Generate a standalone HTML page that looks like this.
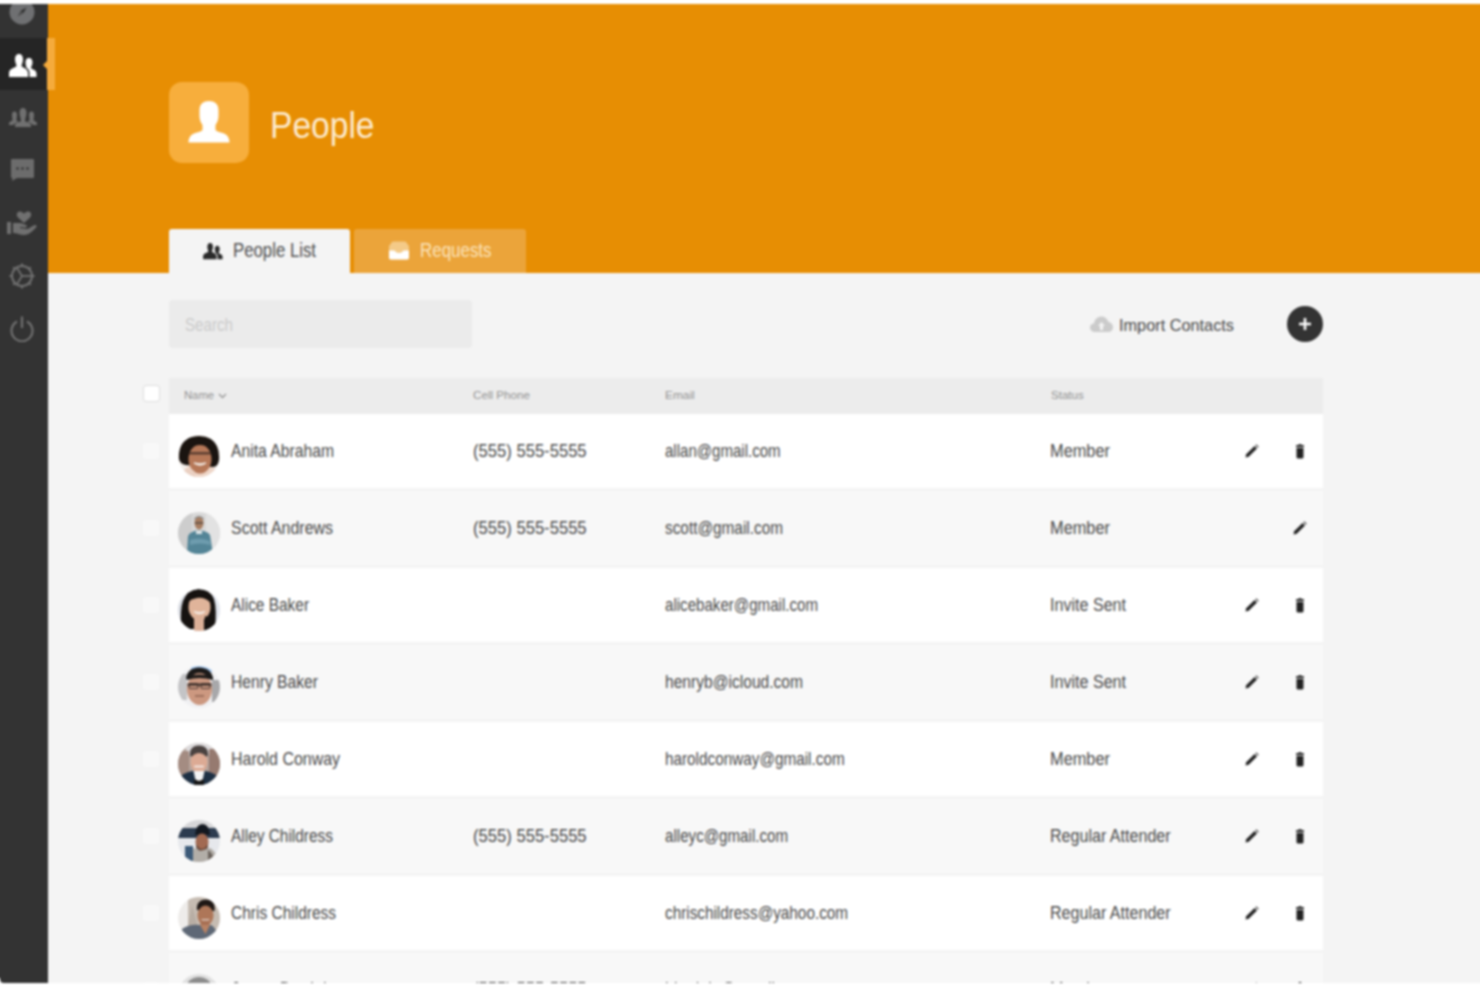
<!DOCTYPE html>
<html><head><meta charset="utf-8">
<style>
*{margin:0;padding:0;box-sizing:border-box}
html,body{width:1480px;height:987px;overflow:hidden;background:#fff;font-family:"Liberation Sans",sans-serif}
#wrap{position:absolute;left:0;top:0;width:1480px;height:987px;filter:blur(1px)}
#app{position:absolute;left:0;top:4px;width:1480px;height:979px;background:#f4f4f4;overflow:hidden}
#side{position:absolute;left:0;top:0;width:48px;height:979px;background:#333;border-bottom-left-radius:4px}
#hdr{position:absolute;left:48px;top:0;right:0;height:269px;background:#e78e03}
.abs{position:absolute}
svg{display:block}
.txt{position:absolute;white-space:nowrap;line-height:1;transform-origin:0 0}
.row{position:absolute;left:169px;width:1154px;height:74px}
.cb{position:absolute;left:143px;width:16px;height:16px;background:#f8f8f8;border-radius:3px}
.rt{font-size:16px;color:#555}

.th{font-size:11.5px;color:#a5a5a5;top:386px}
</style></head>
<body>
<div id="wrap">
<div class="abs" style="left:-12px;top:4px;width:12px;height:974px;background:#333"></div>
<div class="abs" style="left:-12px;top:38px;width:12px;height:52px;background:#252525"></div>
<div class="abs" style="left:1480px;top:4px;width:12px;height:269px;background:#e78e03"></div>
<div class="abs" style="left:1480px;top:273px;width:12px;height:710px;background:#f4f4f4"></div>
<div id="app">
  <div id="hdr"></div>
  <div id="side">
    <div class="abs" style="left:0;top:34px;width:48px;height:52px;background:#252525"></div>
    <!-- compass -->
    <svg class="abs" style="left:9px;top:-5px" width="26" height="26" viewBox="0 0 26 26"><circle cx="13" cy="13" r="12.5" fill="#6f7072"/><path d="M17.5 8.5 L14.3 14.3 L11.7 11.7 Z" fill="#2e2e2e"/><path d="M8.5 17.5 L11.7 11.7 L14.3 14.3 Z" fill="#4a4a4a"/></svg>
    <!-- people active -->
    <svg class="abs" style="left:9px;top:50px" width="28" height="24" viewBox="0 0 28 24"><path d="M10 0 C13 0 14 2.5 14 5.5 C14 8.5 12.5 10.5 12.5 12 C12.5 13.5 19 14 19 19 L19 23 L0 23 L0 19 C0 14 7.5 13.5 7.5 12 C7.5 10.5 6 8.5 6 5.5 C6 2.5 7 0 10 0 Z" fill="#fff"/><path d="M20 4 C22.5 4 23.5 6 23.5 8.5 C23.5 11 22 12.5 22 14 C22 15 27.5 15.5 27.5 19.5 L27.5 23 L20.5 23 L20.5 19 C20.5 16.5 19.5 15 17.5 14 C17.5 13 16.5 11 16.5 8.5 C16.5 6 17.5 4 20 4 Z" fill="#fff"/></svg>
    <!-- groups -->
    <svg class="abs" style="left:9px;top:104px" width="28" height="20" viewBox="0 0 28 20"><path d="M14 0 C16.5 0 17.5 2 17.5 5 C17.5 8 16 10 16 13 C16 14 22 14.5 22 17 L22 19 L6 19 L6 17 C6 14.5 12 14 12 13 C12 10 10.5 8 10.5 5 C10.5 2 11.5 0 14 0 Z" fill="#707070"/><path d="M5.5 3.5 C7.5 3.5 8 5 8 7 C8 9 7.5 10.5 7.5 12 C7.5 13 9 13.5 10 14 C6 15 4.5 16 4.5 17 L0 17 L0 15.5 C0 13.5 3.5 13 3.5 12 C3.5 10.5 3 9 3 7 C3 5 3.5 3.5 5.5 3.5 Z" fill="#707070"/><path d="M22.5 3.5 C24.5 3.5 25 5 25 7 C25 9 24.5 10.5 24.5 12 C24.5 13 28 13.5 28 15.5 L28 17 L23.5 17 C23.5 16 22 15 18 14 C19 13.5 20.5 13 20.5 12 C20.5 10.5 20 9 20 7 C20 5 20.5 3.5 22.5 3.5 Z" fill="#707070"/></svg>
    <!-- chat -->
    <svg class="abs" style="left:11px;top:155px" width="23" height="23" viewBox="0 0 23 23"><path d="M0 1 Q0 0 1 0 L22 0 Q23 0 23 1 L23 18 Q23 19 22 19 L6 19 L1 22 L1.5 19 L1 19 Q0 19 0 18 Z" fill="#6c6c6c"/><circle cx="6.5" cy="9.5" r="1.3" fill="#333"/><circle cx="11.5" cy="9.5" r="1.3" fill="#333"/><circle cx="16.5" cy="9.5" r="1.3" fill="#333"/></svg>
    <!-- hand heart -->
    <svg class="abs" style="left:7px;top:207px" width="30" height="26" viewBox="0 0 30 26"><path d="M17 12 L11 6.5 C9 4.5 9.5 1 12.5 0.5 C14.5 0.2 16 1.5 17 2.8 C18 1.5 19.5 0.2 21.5 0.5 C24.5 1 25 4.5 23 6.5 Z" fill="#707070"/><rect x="0" y="11" width="4" height="12" fill="#707070"/><path d="M6 12 L13 12 C15 12 16 13 19 14 C20.5 14.5 20 16.5 18.5 16.5 L13 16 L13 17 L20 18 C22 18 26 14 28 14 C30 14 30 15.5 29 16.5 C26 19.5 22 24 17 24 C13 24 10 22 6 22 Z" fill="#707070"/></svg>
    <!-- gear -->
    <svg class="abs" style="left:9px;top:259px" width="26" height="26" viewBox="0 0 26 26"><circle cx="13" cy="13" r="10" fill="none" stroke="#707070" stroke-width="2"/><g stroke="#707070" stroke-width="2"><path d="M13 0.5 V3"/><path d="M13 23 V25.5"/><path d="M0.5 13 H3"/><path d="M23 13 H25.5"/><path d="M4.2 4.2 L6 6"/><path d="M20 20 L21.8 21.8"/><path d="M21.8 4.2 L20 6"/><path d="M6 20 L4.2 21.8"/></g><g stroke="#707070" stroke-width="1.8"><path d="M13 13 H22"/><path d="M13 13 L8 5"/><path d="M13 13 L8 21"/></g></svg>
    <!-- power -->
    <svg class="abs" style="left:9px;top:312px" width="26" height="26" viewBox="0 0 26 26"><path d="M8 5.5 A10.5 10.5 0 1 0 18 5.5" fill="none" stroke="#707070" stroke-width="2.2"/><path d="M13 0.5 V12" stroke="#707070" stroke-width="2.2"/></svg>
  </div>
  <div class="abs" style="left:47px;top:34px;width:8px;height:52px;background:#f5ab3c"></div>
  <div class="abs" style="left:43px;top:57px;width:0;height:0;border-top:4px solid transparent;border-bottom:4px solid transparent;border-right:4px solid #f5ab3c"></div>

  <!-- title -->
  <div class="abs" style="left:169px;top:78px;width:80px;height:81px;background:#f7ae3c;border-radius:13px"></div>
  <svg class="abs" style="left:188px;top:96px" width="42" height="44" viewBox="0 0 42 44"><path d="M21 1 C26.5 1 30.5 4 30.5 10 L30.5 16 C30.5 20 29 23 27.5 25 L27.5 30 C28.5 31.5 33 32.5 36 33.5 C40 35 41.5 39 41.5 42.5 L0.5 42.5 C0.5 39 2 35 6 33.5 C9 32.5 13.5 31.5 14.5 30 L14.5 25 C13 23 11.5 20 11.5 16 L11.5 10 C11.5 4 15.5 1 21 1 Z" fill="#fff"/></svg>

  <!-- tabs -->
  <div class="abs" style="left:169px;top:225px;width:181px;height:44px;background:#f4f4f4;border-radius:3px 3px 0 0"></div>
  <svg class="abs" style="left:203px;top:239px" width="20" height="17" viewBox="0 0 28 24"><path d="M10 0 C13 0 14 2.5 14 5.5 C14 8.5 12.5 10.5 12.5 12 C12.5 13.5 19 14 19 19 L19 23 L0 23 L0 19 C0 14 7.5 13.5 7.5 12 C7.5 10.5 6 8.5 6 5.5 C6 2.5 7 0 10 0 Z" fill="#2a2a2a"/><path d="M20 4 C22.5 4 23.5 6 23.5 8.5 C23.5 11 22 12.5 22 14 C22 15 27.5 15.5 27.5 19.5 L27.5 23 L20.5 23 L20.5 19 C20.5 16.5 19.5 15 17.5 14 C17.5 13 16.5 11 16.5 8.5 C16.5 6 17.5 4 20 4 Z" fill="#2a2a2a"/></svg>
  <div class="abs" style="left:354px;top:225px;width:172px;height:44px;background:#eba43a;border-radius:3px 3px 0 0"></div>
  <svg class="abs" style="left:389px;top:237px" width="20" height="19" viewBox="0 0 20 19"><path d="M2 2.5 Q2.5 0.5 4.5 0.5 L15.5 0.5 Q17.5 0.5 18 2.5 L20 5 L20 17 Q20 18.5 18.5 18.5 L1.5 18.5 Q0 18.5 0 17 L0 5 Z" fill="#f4ca88"/><path d="M0 9.5 L5.5 9.5 Q7 12 10 12 Q13 12 14.5 9.5 L20 9.5 L20 16.5 Q20 18.5 18 18.5 L2 18.5 Q0 18.5 0 16.5 Z" fill="#fff"/></svg>

  <!-- search -->
  <div class="abs" style="left:169px;top:296px;width:303px;height:48px;background:#ebebeb;border-radius:4px"></div>

  <svg class="abs" style="left:1090px;top:312px" width="23" height="16" viewBox="0 0 23 16"><path d="M5 16 C2 16 0 14 0 11.5 C0 9 2 7.5 4 7.5 C4.5 3.5 7.5 0.5 11.5 0.5 C15 0.5 17.5 3 18.5 6 C21 6.2 23 8.5 23 11 C23 14 21 16 18 16 Z" fill="#cbcbcb"/><path d="M11.5 6 L15 10 L13 10 L13 14 L10 14 L10 10 L8 10 Z" fill="#f4f4f4"/></svg>
  <div class="abs" style="left:1287px;top:302px;width:36px;height:36px;background:#333;border-radius:50%"></div>
  <svg class="abs" style="left:1298px;top:313px" width="14" height="14" viewBox="0 0 14 14"><path d="M7 1 V13 M1 7 H13" stroke="#fff" stroke-width="2.6"/></svg>

  <!-- table header -->
  <div class="abs" style="left:169px;top:374px;width:1154px;height:36px;background:#ececec"></div>
  <div class="abs" style="left:143px;top:381px;width:17px;height:17px;background:#fff;border:1px solid #ddd;border-radius:3px"></div>
  <svg class="abs" style="left:218px;top:389px" width="9" height="6" viewBox="0 0 9 6"><path d="M1 1 L4.5 4.5 L8 1" fill="none" stroke="#999" stroke-width="1.4"/></svg>

<div class="txt" style="left:270.0px;top:103.17px;font-size:37px;color:#fdebd0;transform:scaleX(0.907);">People</div>
<div class="txt" style="left:232.5px;top:237.49px;font-size:19.5px;color:#4e4e4e;transform:scaleX(0.860);">People List</div>
<div class="txt" style="left:420.0px;top:237.49px;font-size:19.5px;color:#fbe3bb;transform:scaleX(0.868);">Requests</div>
<div class="txt" style="left:185.0px;top:312.68px;font-size:17.5px;color:#cacaca;transform:scaleX(0.866);">Search</div>
<div class="txt" style="left:1119.0px;top:312.61px;font-size:17px;color:#484848;transform:scaleX(0.958);">Import Contacts</div>
<div class="txt" style="left:184.0px;top:385.56px;font-size:11.5px;color:#929292;transform:scaleX(0.978);">Name</div>
<div class="txt" style="left:473.0px;top:385.56px;font-size:11.5px;color:#929292;transform:scaleX(1.013);">Cell Phone</div>
<div class="txt" style="left:665.0px;top:385.56px;font-size:11.5px;color:#929292;transform:scaleX(1.033);">Email</div>
<div class="txt" style="left:1050.5px;top:385.56px;font-size:11.5px;color:#929292;transform:scaleX(1.006);">Status</div>
<div class="row" style="top:410px;background:#ffffff"></div>
<div class="cb" style="top:439px"></div>
<div class="abs" style="left:178px;top:431px"><svg class="av" width="42" height="42" viewBox="0 0 42 42"><defs><clipPath id="c0"><circle cx="21" cy="21" r="21"/></clipPath></defs><g clip-path="url(#c0)"><rect width="42" height="42" fill="#f4eeea"/><path d="M4 42 Q6 31 14 30 L30 30 Q38 31 40 42 Z" fill="#eed6c8"/><path d="M1 24 Q0 6 14 2 Q24 -1 33 4 Q42 10 41 25 Q40 32 35 32 L8 30 Q2 29 1 24 Z" fill="#1a1410"/><ellipse cx="22" cy="24" rx="11.5" ry="14.5" fill="#b67858"/><path d="M10 14 Q22 6 34 14 L34 11 Q22 3 10 11 Z" fill="#1a1410"/><path d="M11 17 H33 V19.5 H11 Z" fill="#3e2c24" opacity=".75"/><path d="M16 28 Q22 32 28 28 Q22 30 16 28 Z" fill="#fff" stroke="#f4ece6" stroke-width="1.5"/><path d="M6 36 Q12 31 17 37 L17 42 L5 42 Z" fill="#ead0c2"/></g></svg></div>
<div class="txt" style="left:231.0px;top:437.96px;font-size:18px;color:#4a4a4a;transform:scaleX(0.872);">Anita Abraham</div>
<div class="txt" style="left:473.0px;top:437.96px;font-size:18px;color:#4a4a4a;transform:scaleX(0.923);">(555) 555-5555</div>
<div class="txt" style="left:665.0px;top:437.96px;font-size:18px;color:#4a4a4a;transform:scaleX(0.836);">allan@gmail.com</div>
<div class="txt" style="left:1050.0px;top:437.96px;font-size:18px;color:#4a4a4a;transform:scaleX(0.909);">Member</div>
<div class="abs" style="left:1245px;top:440px"><svg width="14" height="14" viewBox="0 0 14 14"><path d="M0.5 13.5 L1.2 10.3 L9.5 2 L12 4.5 L3.7 12.8 Z" fill="#222"/><path d="M10.3 1.2 L11.3 0.2 L13.8 2.7 L12.8 3.7 Z" fill="#555"/></svg></div>
<div class="abs" style="left:1295px;top:440px"><svg width="10" height="15" viewBox="0 0 10 15"><rect x="3.7" y="0" width="2.6" height="1.5" fill="#333"/><rect x="1" y="1" width="8" height="2.2" rx="0.8" fill="#333"/><path d="M1.5 4 H8.5 V13 Q8.5 14.5 7 14.5 H3 Q1.5 14.5 1.5 13 Z" fill="#222"/></svg></div>
<div class="row" style="top:487px;background:#f8f8f8"></div>
<div class="cb" style="top:516px"></div>
<div class="abs" style="left:178px;top:508px"><svg class="av" width="42" height="42" viewBox="0 0 42 42"><defs><clipPath id="c1"><circle cx="21" cy="21" r="21"/></clipPath></defs><g clip-path="url(#c1)"><rect width="42" height="42" fill="#d8d8d8"/><rect x="0" y="0" width="14" height="42" fill="#cdcdcd"/><rect x="28" y="0" width="14" height="42" fill="#e2e2e2"/><ellipse cx="21" cy="11" rx="4.5" ry="6.5" fill="#a87e62"/><path d="M16.5 8 Q21 2.5 25.5 8 L25.5 6 Q21 2 16.5 6 Z" fill="#8a8a8a"/><rect x="17" y="10" width="8" height="1.8" fill="#3a3a3a" opacity=".6"/><path d="M9 42 L10 24 Q13 18.5 21 18.5 Q29 18.5 32 23 L35 42 Z" fill="#548597"/><path d="M12 28 Q22 25 32 29 L32 33 Q22 30 12 33 Z" fill="#6e9cae"/><rect x="18" y="19" width="6" height="3" fill="#e0e6e8"/></g></svg></div>
<div class="txt" style="left:231.0px;top:514.96px;font-size:18px;color:#4a4a4a;transform:scaleX(0.887);">Scott Andrews</div>
<div class="txt" style="left:473.0px;top:514.96px;font-size:18px;color:#4a4a4a;transform:scaleX(0.923);">(555) 555-5555</div>
<div class="txt" style="left:665.0px;top:514.96px;font-size:18px;color:#4a4a4a;transform:scaleX(0.853);">scott@gmail.com</div>
<div class="txt" style="left:1050.0px;top:514.96px;font-size:18px;color:#4a4a4a;transform:scaleX(0.909);">Member</div>
<div class="abs" style="left:1293px;top:517px"><svg width="14" height="14" viewBox="0 0 14 14"><path d="M0.5 13.5 L1.2 10.3 L9.5 2 L12 4.5 L3.7 12.8 Z" fill="#222"/><path d="M10.3 1.2 L11.3 0.2 L13.8 2.7 L12.8 3.7 Z" fill="#555"/></svg></div>
<div class="row" style="top:564px;background:#ffffff"></div>
<div class="cb" style="top:593px"></div>
<div class="abs" style="left:178px;top:585px"><svg class="av" width="42" height="42" viewBox="0 0 42 42"><defs><clipPath id="c2"><circle cx="21" cy="21" r="21"/></clipPath></defs><g clip-path="url(#c2)"><rect width="42" height="42" fill="#f6f6f8"/><rect x="0" y="4" width="7" height="28" fill="#d8dbe2"/><rect x="35" y="6" width="7" height="26" fill="#e2e6ee"/><path d="M3 40 Q2 20 5 12 Q9 1 20 0 Q32 0 36 10 Q39 20 37 40 Z" fill="#161210"/><ellipse cx="21.5" cy="18" rx="11" ry="13.5" fill="#e0b49a"/><path d="M10 13 Q14 3 23 4 Q31 5 33 14 Q27 8 19 9 Q13 10 10 13 Z" fill="#161210"/><rect x="16" y="27" width="10" height="15" fill="#dcb098"/><path d="M27 27 L37 30 L37 42 L26 42 Z" fill="#161210"/><path d="M16 22.5 Q21.5 27 27 22.5 Q21.5 24.5 16 22.5 Z" fill="#fff" stroke="#f6eee8" stroke-width="1.2"/></g></svg></div>
<div class="txt" style="left:231.0px;top:591.96px;font-size:18px;color:#4a4a4a;transform:scaleX(0.857);">Alice Baker</div>
<div class="txt" style="left:665.0px;top:591.96px;font-size:18px;color:#4a4a4a;transform:scaleX(0.839);">alicebaker@gmail.com</div>
<div class="txt" style="left:1050.0px;top:591.96px;font-size:18px;color:#4a4a4a;transform:scaleX(0.894);">Invite Sent</div>
<div class="abs" style="left:1245px;top:594px"><svg width="14" height="14" viewBox="0 0 14 14"><path d="M0.5 13.5 L1.2 10.3 L9.5 2 L12 4.5 L3.7 12.8 Z" fill="#222"/><path d="M10.3 1.2 L11.3 0.2 L13.8 2.7 L12.8 3.7 Z" fill="#555"/></svg></div>
<div class="abs" style="left:1295px;top:594px"><svg width="10" height="15" viewBox="0 0 10 15"><rect x="3.7" y="0" width="2.6" height="1.5" fill="#333"/><rect x="1" y="1" width="8" height="2.2" rx="0.8" fill="#333"/><path d="M1.5 4 H8.5 V13 Q8.5 14.5 7 14.5 H3 Q1.5 14.5 1.5 13 Z" fill="#222"/></svg></div>
<div class="row" style="top:641px;background:#f8f8f8"></div>
<div class="cb" style="top:670px"></div>
<div class="abs" style="left:178px;top:662px"><svg class="av" width="42" height="42" viewBox="0 0 42 42"><defs><clipPath id="c3"><circle cx="21" cy="21" r="21"/></clipPath></defs><g clip-path="url(#c3)"><rect width="42" height="42" fill="#f0f0f2"/><rect x="13" y="-2" width="21" height="8" fill="#a4c8f0"/><rect x="0" y="8" width="9" height="26" fill="#c4c4c6"/><rect x="34" y="14" width="8" height="22" fill="#a8a8aa"/><path d="M8 13 Q9 2 21 1.5 Q34 2 35 13 Z" fill="#1c1a19"/><ellipse cx="21.5" cy="23" rx="12.5" ry="16" fill="#cc9880"/><path d="M9 11 Q21 6 35 11 L35 14 Q21 10 9 14 Z" fill="#1c1a19"/><rect x="9.5" y="17.5" width="24" height="2.2" fill="#2a2220" opacity=".85"/><rect x="11" y="17.5" width="9" height="5" rx="1.5" fill="none" stroke="#2a2220" stroke-width="1.2" opacity=".8"/><rect x="23" y="17.5" width="9" height="5" rx="1.5" fill="none" stroke="#2a2220" stroke-width="1.2" opacity=".8"/><rect x="17" y="29" width="9" height="1.8" fill="#7a5040" opacity=".6"/></g></svg></div>
<div class="txt" style="left:231.0px;top:668.96px;font-size:18px;color:#4a4a4a;transform:scaleX(0.870);">Henry Baker</div>
<div class="txt" style="left:665.0px;top:668.96px;font-size:18px;color:#4a4a4a;transform:scaleX(0.866);">henryb@icloud.com</div>
<div class="txt" style="left:1050.0px;top:668.96px;font-size:18px;color:#4a4a4a;transform:scaleX(0.894);">Invite Sent</div>
<div class="abs" style="left:1245px;top:671px"><svg width="14" height="14" viewBox="0 0 14 14"><path d="M0.5 13.5 L1.2 10.3 L9.5 2 L12 4.5 L3.7 12.8 Z" fill="#222"/><path d="M10.3 1.2 L11.3 0.2 L13.8 2.7 L12.8 3.7 Z" fill="#555"/></svg></div>
<div class="abs" style="left:1295px;top:671px"><svg width="10" height="15" viewBox="0 0 10 15"><rect x="3.7" y="0" width="2.6" height="1.5" fill="#333"/><rect x="1" y="1" width="8" height="2.2" rx="0.8" fill="#333"/><path d="M1.5 4 H8.5 V13 Q8.5 14.5 7 14.5 H3 Q1.5 14.5 1.5 13 Z" fill="#222"/></svg></div>
<div class="row" style="top:718px;background:#ffffff"></div>
<div class="cb" style="top:747px"></div>
<div class="abs" style="left:178px;top:739px"><svg class="av" width="42" height="42" viewBox="0 0 42 42"><defs><clipPath id="c4"><circle cx="21" cy="21" r="21"/></clipPath></defs><g clip-path="url(#c4)"><rect width="42" height="42" fill="#b4a49c"/><rect x="8" y="0" width="26" height="12" fill="#dcdadc"/><rect x="0" y="8" width="11" height="26" fill="#a48c82"/><rect x="31" y="6" width="11" height="28" fill="#967a70"/><path d="M12 13 Q11 3 21 2.5 Q31 3 30 13 Z" fill="#4a4240"/><ellipse cx="21" cy="19" rx="8.5" ry="10.5" fill="#dcaa94"/><path d="M13.5 14 Q13 7 21 6.5 Q29 7 28.5 14 Q25 10 21 10 Q17 10 13.5 14 Z" fill="#4a4240"/><rect x="16" y="22.5" width="10" height="2" rx="1" fill="#f2e6e0"/><path d="M1 42 L4 32 Q11 28 16 28 L26 28 Q31 28 38 32 L41 42 Z" fill="#1e3044"/><path d="M15.5 28 L26.5 28 L24 40 L18 40 Z" fill="#f4f4f4"/><path d="M16 36 L21 38 L26 36 L26 42 L16 42 Z" fill="#151515"/></g></svg></div>
<div class="txt" style="left:231.0px;top:745.96px;font-size:18px;color:#4a4a4a;transform:scaleX(0.886);">Harold Conway</div>
<div class="txt" style="left:665.0px;top:745.96px;font-size:18px;color:#4a4a4a;transform:scaleX(0.850);">haroldconway@gmail.com</div>
<div class="txt" style="left:1050.0px;top:745.96px;font-size:18px;color:#4a4a4a;transform:scaleX(0.909);">Member</div>
<div class="abs" style="left:1245px;top:748px"><svg width="14" height="14" viewBox="0 0 14 14"><path d="M0.5 13.5 L1.2 10.3 L9.5 2 L12 4.5 L3.7 12.8 Z" fill="#222"/><path d="M10.3 1.2 L11.3 0.2 L13.8 2.7 L12.8 3.7 Z" fill="#555"/></svg></div>
<div class="abs" style="left:1295px;top:748px"><svg width="10" height="15" viewBox="0 0 10 15"><rect x="3.7" y="0" width="2.6" height="1.5" fill="#333"/><rect x="1" y="1" width="8" height="2.2" rx="0.8" fill="#333"/><path d="M1.5 4 H8.5 V13 Q8.5 14.5 7 14.5 H3 Q1.5 14.5 1.5 13 Z" fill="#222"/></svg></div>
<div class="row" style="top:795px;background:#f8f8f8"></div>
<div class="cb" style="top:824px"></div>
<div class="abs" style="left:178px;top:816px"><svg class="av" width="42" height="42" viewBox="0 0 42 42"><defs><clipPath id="c5"><circle cx="21" cy="21" r="21"/></clipPath></defs><g clip-path="url(#c5)"><rect width="42" height="42" fill="#e6e8ec"/><rect x="0" y="0" width="42" height="8" fill="#d6d6d8"/><rect x="0" y="8" width="42" height="10" fill="#2c3c50"/><path d="M17 15 Q18 4 24.5 4 Q31 4 32 15 Z" fill="#131820"/><ellipse cx="24" cy="22" rx="6.5" ry="8.5" fill="#a26a52"/><path d="M18 24 Q24 34 30 24 L30 28 Q24 36 18 28 Z" fill="#4a3024" opacity=".7"/><path d="M7 42 L9 30 Q16 26 22 31 L32 28 Q40 32 38 42 Z" fill="#b2aea8"/><path d="M30 30 Q36 34 36 42 L30 42 Z" fill="#6a625c"/><rect x="7" y="26" width="8" height="16" fill="#3c5a78"/></g></svg></div>
<div class="txt" style="left:231.0px;top:822.96px;font-size:18px;color:#4a4a4a;transform:scaleX(0.857);">Alley Childress</div>
<div class="txt" style="left:473.0px;top:822.96px;font-size:18px;color:#4a4a4a;transform:scaleX(0.923);">(555) 555-5555</div>
<div class="txt" style="left:665.0px;top:822.96px;font-size:18px;color:#4a4a4a;transform:scaleX(0.841);">alleyc@gmail.com</div>
<div class="txt" style="left:1050.0px;top:822.96px;font-size:18px;color:#4a4a4a;transform:scaleX(0.893);">Regular Attender</div>
<div class="abs" style="left:1245px;top:825px"><svg width="14" height="14" viewBox="0 0 14 14"><path d="M0.5 13.5 L1.2 10.3 L9.5 2 L12 4.5 L3.7 12.8 Z" fill="#222"/><path d="M10.3 1.2 L11.3 0.2 L13.8 2.7 L12.8 3.7 Z" fill="#555"/></svg></div>
<div class="abs" style="left:1295px;top:825px"><svg width="10" height="15" viewBox="0 0 10 15"><rect x="3.7" y="0" width="2.6" height="1.5" fill="#333"/><rect x="1" y="1" width="8" height="2.2" rx="0.8" fill="#333"/><path d="M1.5 4 H8.5 V13 Q8.5 14.5 7 14.5 H3 Q1.5 14.5 1.5 13 Z" fill="#222"/></svg></div>
<div class="row" style="top:872px;background:#ffffff"></div>
<div class="cb" style="top:901px"></div>
<div class="abs" style="left:178px;top:893px"><svg class="av" width="42" height="42" viewBox="0 0 42 42"><defs><clipPath id="c6"><circle cx="21" cy="21" r="21"/></clipPath></defs><g clip-path="url(#c6)"><rect width="42" height="42" fill="#eeecea"/><rect x="10" y="0" width="32" height="36" fill="#c6bcb2"/><path d="M14 8 L20 30 L10 30 Z" fill="#b8aea4"/><path d="M19 13 Q18 3 28 2.5 Q38 3 36.5 14 Z" fill="#1f1815"/><ellipse cx="27.5" cy="18.5" rx="8" ry="10" fill="#ae7658"/><rect x="22.5" y="24" width="9" height="9" fill="#a87054"/><rect x="23.5" y="22" width="8" height="1.5" rx=".7" fill="#d8c4b8"/><path d="M2 42 L4 32 Q12 27 21 28 L33 28 Q39 31 40 42 Z" fill="#5e6876"/><path d="M22 28 L32 28 L27.5 37 Z" fill="#b88264"/></g></svg></div>
<div class="txt" style="left:231.0px;top:899.96px;font-size:18px;color:#4a4a4a;transform:scaleX(0.861);">Chris Childress</div>
<div class="txt" style="left:665.0px;top:899.96px;font-size:18px;color:#4a4a4a;transform:scaleX(0.850);">chrischildress@yahoo.com</div>
<div class="txt" style="left:1050.0px;top:899.96px;font-size:18px;color:#4a4a4a;transform:scaleX(0.893);">Regular Attender</div>
<div class="abs" style="left:1245px;top:902px"><svg width="14" height="14" viewBox="0 0 14 14"><path d="M0.5 13.5 L1.2 10.3 L9.5 2 L12 4.5 L3.7 12.8 Z" fill="#222"/><path d="M10.3 1.2 L11.3 0.2 L13.8 2.7 L12.8 3.7 Z" fill="#555"/></svg></div>
<div class="abs" style="left:1295px;top:902px"><svg width="10" height="15" viewBox="0 0 10 15"><rect x="3.7" y="0" width="2.6" height="1.5" fill="#333"/><rect x="1" y="1" width="8" height="2.2" rx="0.8" fill="#333"/><path d="M1.5 4 H8.5 V13 Q8.5 14.5 7 14.5 H3 Q1.5 14.5 1.5 13 Z" fill="#222"/></svg></div>
<div class="row" style="top:949px;background:#f8f8f8"></div>
<div class="cb" style="top:978px"></div>
<div class="abs" style="left:178px;top:970px"><svg class="av" width="42" height="42" viewBox="0 0 42 42"><defs><clipPath id="c7"><circle cx="21" cy="21" r="21"/></clipPath></defs><g clip-path="url(#c7)"><rect width="42" height="42" fill="#e0e0e0"/><ellipse cx="21" cy="12" rx="12" ry="9" fill="#8c8c8c"/><ellipse cx="21" cy="20" rx="9" ry="10" fill="#c09078"/></g></svg></div>
<div class="txt" style="left:231.0px;top:975.96px;font-size:18px;color:#4a4a4a;transform:scaleX(0.920);">Jason Daniels</div>
<div class="txt" style="left:473.0px;top:975.96px;font-size:18px;color:#4a4a4a;transform:scaleX(0.923);">(555) 555-5555</div>
<div class="txt" style="left:665.0px;top:975.96px;font-size:18px;color:#4a4a4a;transform:scaleX(0.900);">jdaniels@gmail.com</div>
<div class="txt" style="left:1050.0px;top:975.96px;font-size:18px;color:#4a4a4a;transform:scaleX(0.909);">Member</div>
<div class="abs" style="left:1245px;top:978px"><svg width="14" height="14" viewBox="0 0 14 14"><path d="M0.5 13.5 L1.2 10.3 L9.5 2 L12 4.5 L3.7 12.8 Z" fill="#222"/><path d="M10.3 1.2 L11.3 0.2 L13.8 2.7 L12.8 3.7 Z" fill="#555"/></svg></div>
<div class="abs" style="left:1295px;top:978px"><svg width="10" height="15" viewBox="0 0 10 15"><rect x="3.7" y="0" width="2.6" height="1.5" fill="#333"/><rect x="1" y="1" width="8" height="2.2" rx="0.8" fill="#333"/><path d="M1.5 4 H8.5 V13 Q8.5 14.5 7 14.5 H3 Q1.5 14.5 1.5 13 Z" fill="#222"/></svg></div>
</div>
</div>
</body></html>
